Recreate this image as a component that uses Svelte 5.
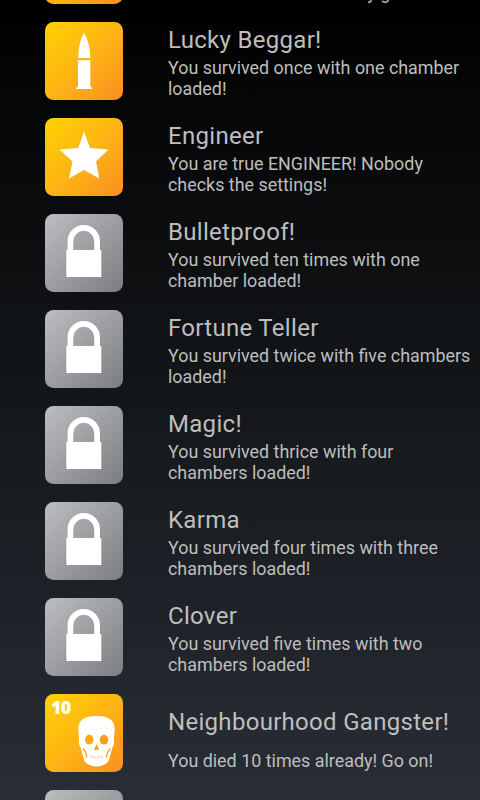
<script>
  const achievements = [
    { icon: 'star', title: 'Beginner', lines: ['You used the tricks! Really good!'] },
    { icon: 'bullet', title: 'Lucky Beggar!', lines: ['You survived once with one chamber', 'loaded!'] },
    { icon: 'star', title: 'Engineer', lines: ['You are true ENGINEER! Nobody', 'checks the settings!'] },
    { icon: 'lock', title: 'Bulletproof!', lines: ['You survived ten times with one', 'chamber loaded!'] },
    { icon: 'lock', title: 'Fortune Teller', lines: ['You survived twice with five chambers', 'loaded!'] },
    { icon: 'lock', title: 'Magic!', lines: ['You survived thrice with four', 'chambers loaded!'] },
    { icon: 'lock', title: 'Karma', lines: ['You survived four times with three', 'chambers loaded!'] },
    { icon: 'lock', title: 'Clover', lines: ['You survived five times with two', 'chambers loaded!'] },
    { icon: 'skull', title: 'Neighbourhood Gangster!', lines: ['You died 10 times already! Go on!'] },
    { icon: 'lock', title: '', lines: [] },
  ];
</script>

<div class="screen">
  <ul class="list">
    {#each achievements as item}
      <li class="row">
        <svg class="badge" viewBox="0 0 78 78" aria-hidden="true">
          <defs>
            <linearGradient id="gold" x1="0" y1="0" x2="1" y2="1">
              <stop offset="0" stop-color="#ffd103" />
              <stop offset="0.5" stop-color="#fdb515" />
              <stop offset="1" stop-color="#f98f20" />
            </linearGradient>
            <linearGradient id="steel" x1="0" y1="0" x2="1" y2="1">
              <stop offset="0" stop-color="#bcbdc0" />
              <stop offset="0.5" stop-color="#9b9da0" />
              <stop offset="1" stop-color="#7c7e81" />
            </linearGradient>
          </defs>
          <rect width="78" height="78" rx="8.5" fill={item.icon === 'lock' ? 'url(#steel)' : 'url(#gold)'} />
          {#if item.icon === 'bullet'}
            <path fill="#fff" d="M39 11C36 16 33.300 24 33.300 36H45.300C45.300 24 42 16 39 11ZM33 38.200H45.300V64.500L47.300 66V67H31V66L33 64.500Z" />
          {:else if item.icon === 'star'}
            <path fill="#fff" d="M39 13.500L45 30L63.500 31.500L51 43.500L54.300 60.500L39 52L24 60.500L27.500 43.500L14.500 31.500L33.300 30Z" />
          {:else if item.icon === 'lock'}
            <path fill="none" stroke="#fff" stroke-width="5.700" d="M25.400 38V27.300A13.350 13.350 0 0 1 52.100 27.300V38" />
            <rect x="21.300" y="36" width="35" height="27" fill="#fff" />
          {:else if item.icon === 'skull'}
            <text class="count" x="6" y="20">10</text>
            <path fill="#fff" d="M51.300 22C39 22 33.300 26 33.300 35C33.300 39 34 41 34 45C34 48 33.500 51 35.500 53L39 66C41 70 46 72.500 51.500 72.500S62 70 64 66L67.500 53C69.500 51 69 48 69 45C69 41 69.600 39 69.600 35C69.600 26 64 22 51.300 22Z" />
            <ellipse cx="44.300" cy="45.700" rx="4.200" ry="4.900" fill="#fba91a" />
            <ellipse cx="59" cy="45.700" rx="4.200" ry="4.900" fill="#fa9f1b" />
            <path fill="#fba31a" d="M51.600 50L54.200 56H52.500L51.600 55.400L50.700 56H49Z" />
            <path fill="none" stroke="#fba31a" stroke-width="1.300" d="M38 54.500L40.500 58L42 63.500M65.300 54.500L62.800 58L61.300 63.500" />
            <path fill="none" stroke="#fdd3a0" stroke-width="0.700" d="M44 62.500Q51.500 64.500 59.500 62.500M46.500 61V64.500M49.500 61.500V65M53.500 61.500V65M56.500 61V64.500" />
          {/if}
        </svg>
        <div class="text" class:single={item.lines.length === 1}>
          <h2>{item.title}</h2>
          <p>
            {#each item.lines as line}
              <span>{line}</span>
            {/each}
          </p>
        </div>
      </li>
    {/each}
  </ul>
</div>

<style>
  :global(body) {
    margin: 0;
    background: #000;
  }

  .screen {
    height: 800px;
    overflow: hidden;
    background: linear-gradient(#000 0%, #070809 18%, #14171a 50%, #292d36 100%);
    color: #bebebe;
    font-family: Roboto, sans-serif;
  }

  .list {
    margin: -83px 0 0;
    padding: 0;
    list-style: none;
  }

  .row {
    display: flex;
    align-items: center;
    gap: 45px;
    height: 96px;
    padding-left: 45px;
  }

  .badge {
    flex: none;
    width: 78px;
    height: 78px;
  }

  .count {
    fill: #fff;
    font-family: 'Open Sans', sans-serif;
    font-size: 18px;
    font-weight: 800;
    letter-spacing: -0.8px;
  }

  .text {
    align-self: flex-start;
    padding-top: 13px;
    white-space: nowrap;
  }

  h2 {
    margin: 0;
    font-size: 24px;
    font-weight: 400;
    line-height: 28px;
    letter-spacing: 0.3px;
  }

  p {
    margin: 3px 0 0;
    font-size: 17.9px;
    line-height: 21px;
  }

  .single {
    padding-top: 23px;
  }

  .single p {
    margin-top: 14px;
  }

  span {
    display: block;
  }
</style>
